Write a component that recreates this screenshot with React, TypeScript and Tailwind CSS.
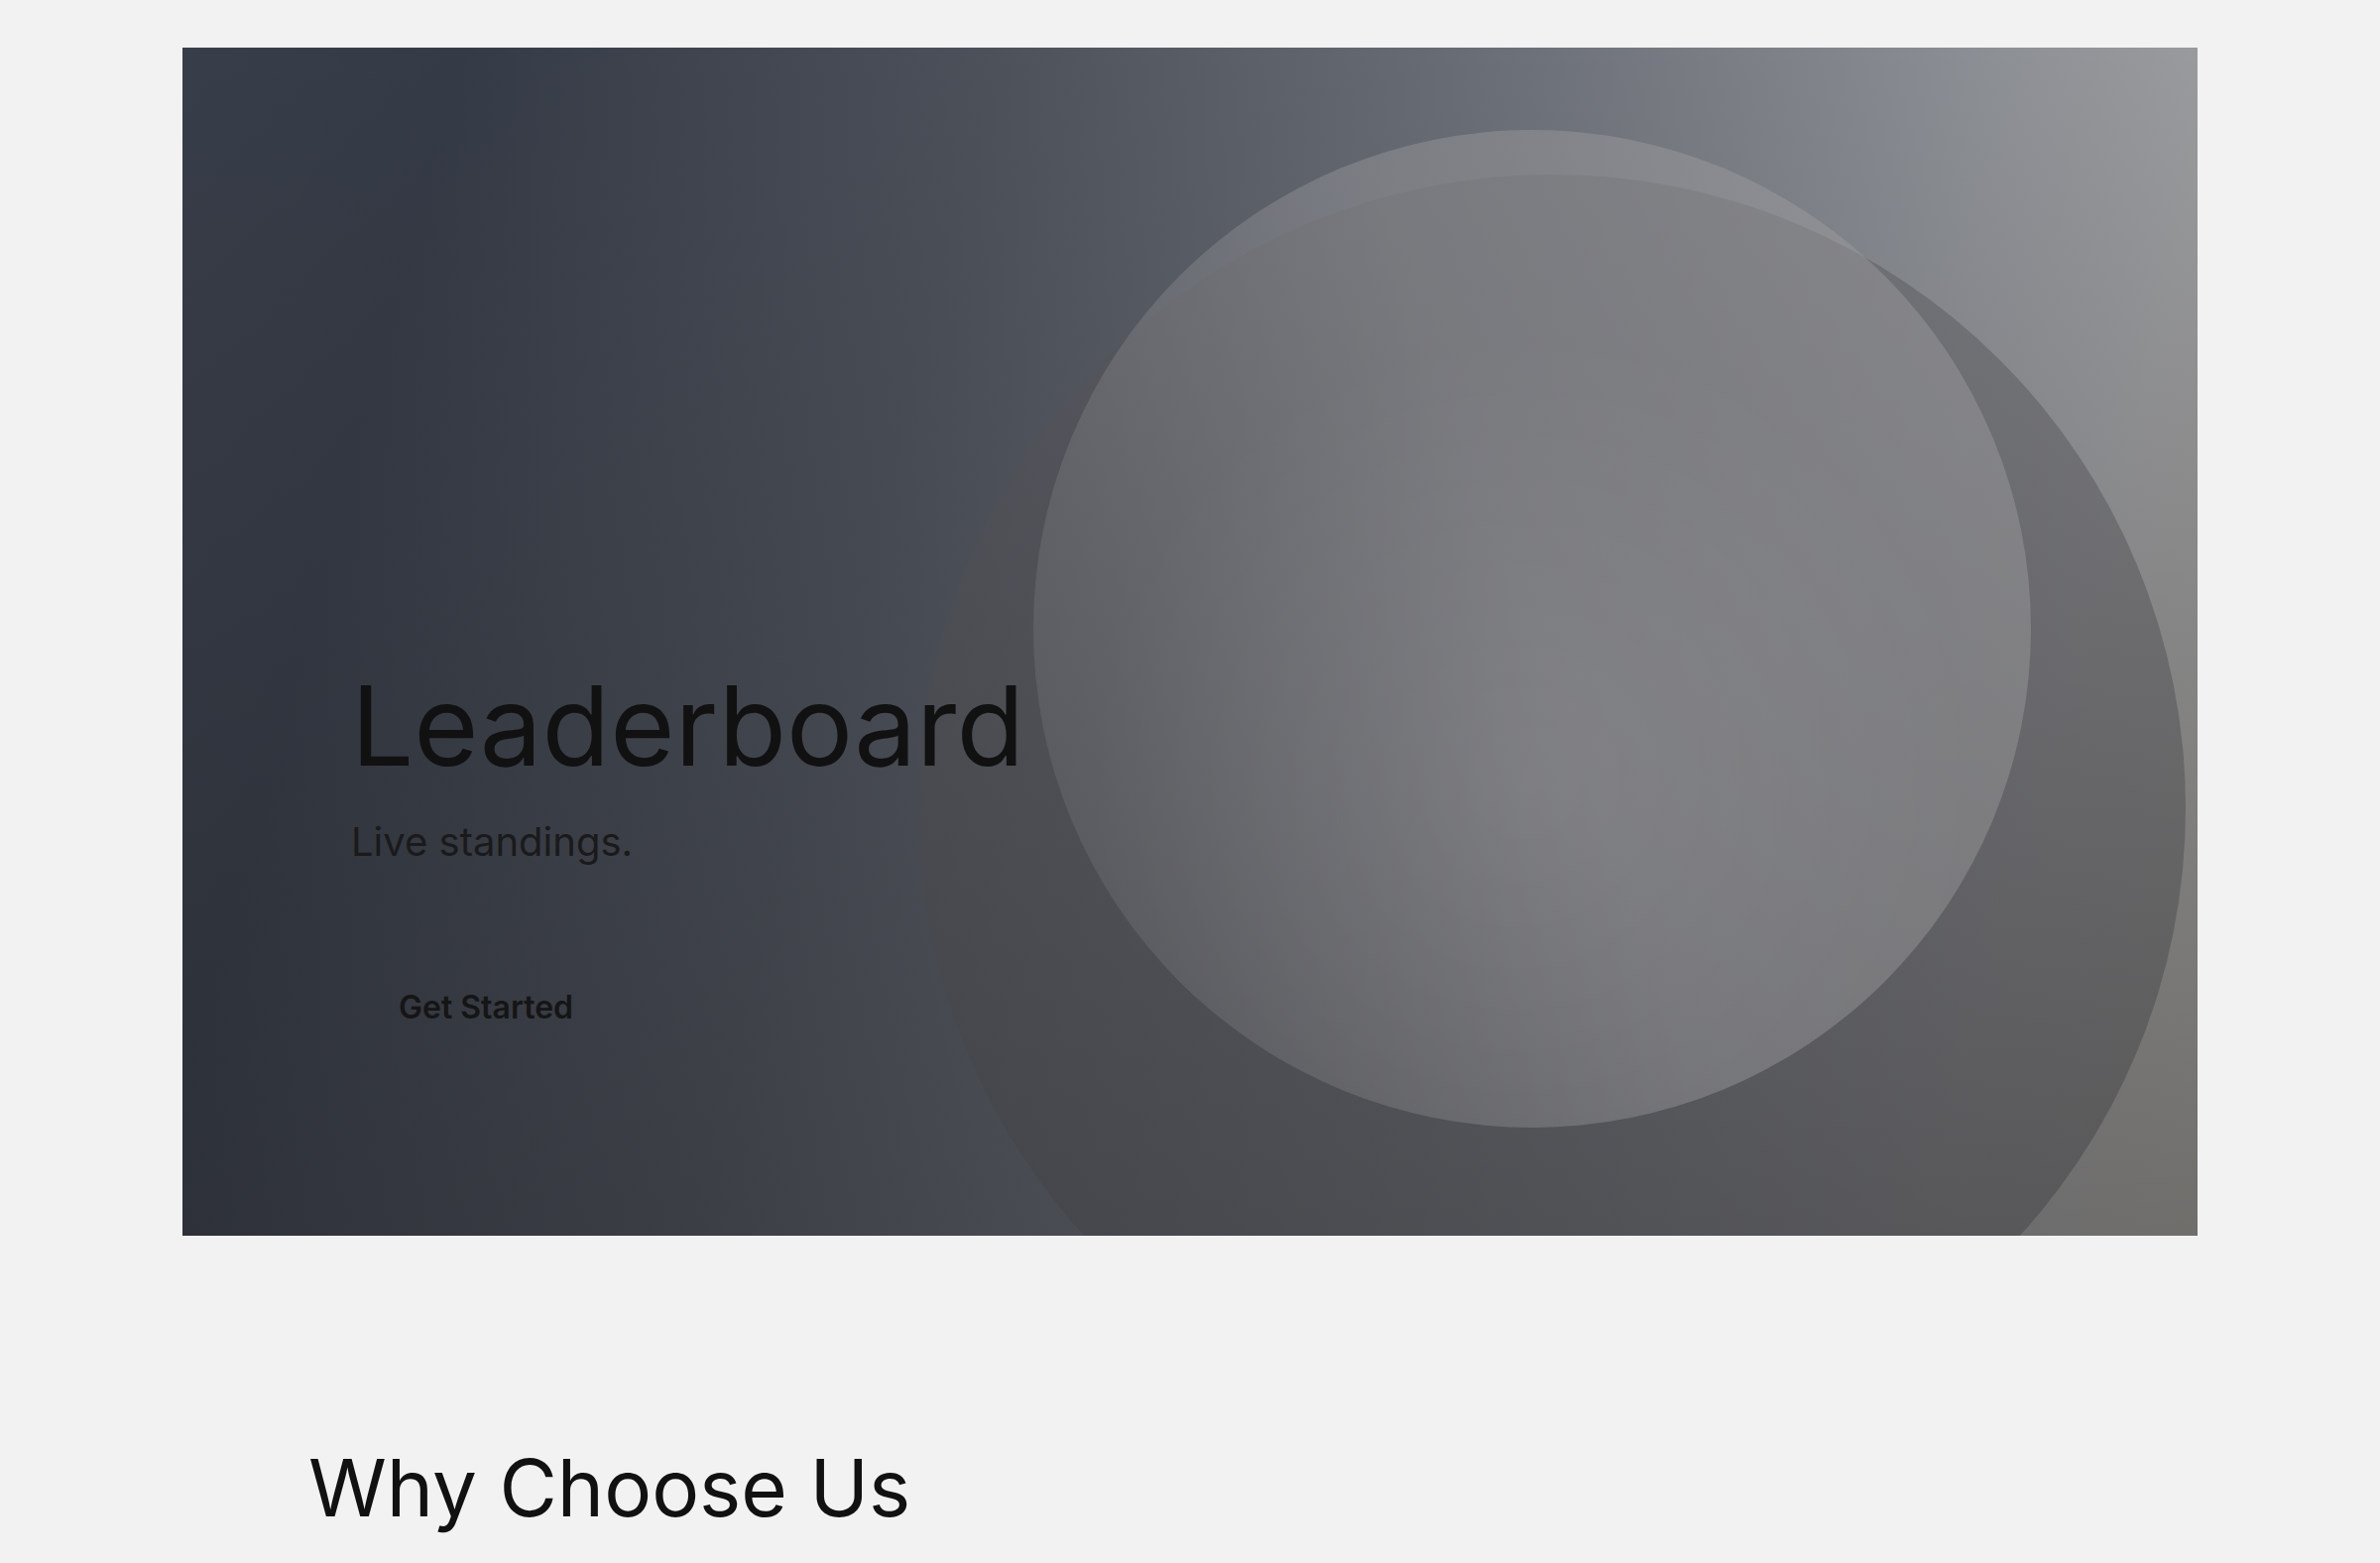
import React from "react";

export default function App() {
  return (
    <div className="min-h-screen w-full bg-[#f2f2f2] pt-[48px] font-['Inter','Noto_Sans',sans-serif] text-[#111111]">
      <section className="relative mx-[184px] h-[1198px] overflow-hidden bg-[linear-gradient(105deg,#383e49_0%,#353b46_12%,#4c515a_35%,#6d7179_58%,#8d9095_78%,#9b9c9e_88%,#a19f98_100%)]">
        <div className="pointer-events-none absolute inset-0 bg-[linear-gradient(to_bottom,rgba(30,30,33,0)_0%,rgba(30,30,33,0.38)_100%)]" />
        <div className="pointer-events-none absolute left-[742px] top-[128px] h-[1278px] w-[1278px] rounded-full bg-[linear-gradient(to_bottom,rgba(88,88,92,0.45)_0%,rgba(62,62,65,0.5)_100%)]" />
        <div className="pointer-events-none absolute left-[858px] top-[83px] h-[1006px] w-[1006px] rounded-full bg-[linear-gradient(70deg,rgba(160,160,162,0.12)_0%,rgba(160,160,162,0.2)_17%,rgba(160,160,162,0.3)_35%,rgba(160,160,162,0.4)_50%,rgba(160,160,162,0.44)_100%)]">
          <div className="absolute inset-0 rounded-full bg-[radial-gradient(circle_at_50%_65%,rgba(255,255,255,0.08)_0%,rgba(255,255,255,0)_55%)]" />
        </div>
        <div className="relative flex flex-col items-start pl-[170px] pt-[627px]">
          <h1 className="text-[112px] font-normal leading-none text-[#111111]">Leaderboard</h1>
          <p className="mt-8 text-[40px] leading-[1.5] text-[#1a1a1a]">Live standings.</p>
          <button className="mt-[97px] px-12 py-4 text-[32px] font-semibold leading-[1.5] text-[#151515]">
            Get Started
          </button>
        </div>
      </section>
      <section className="px-[311px] pt-[214px]">
        <h2 className="text-[80px] font-normal leading-none text-[#111111]">Why Choose Us</h2>
      </section>
    </div>
  );
}
